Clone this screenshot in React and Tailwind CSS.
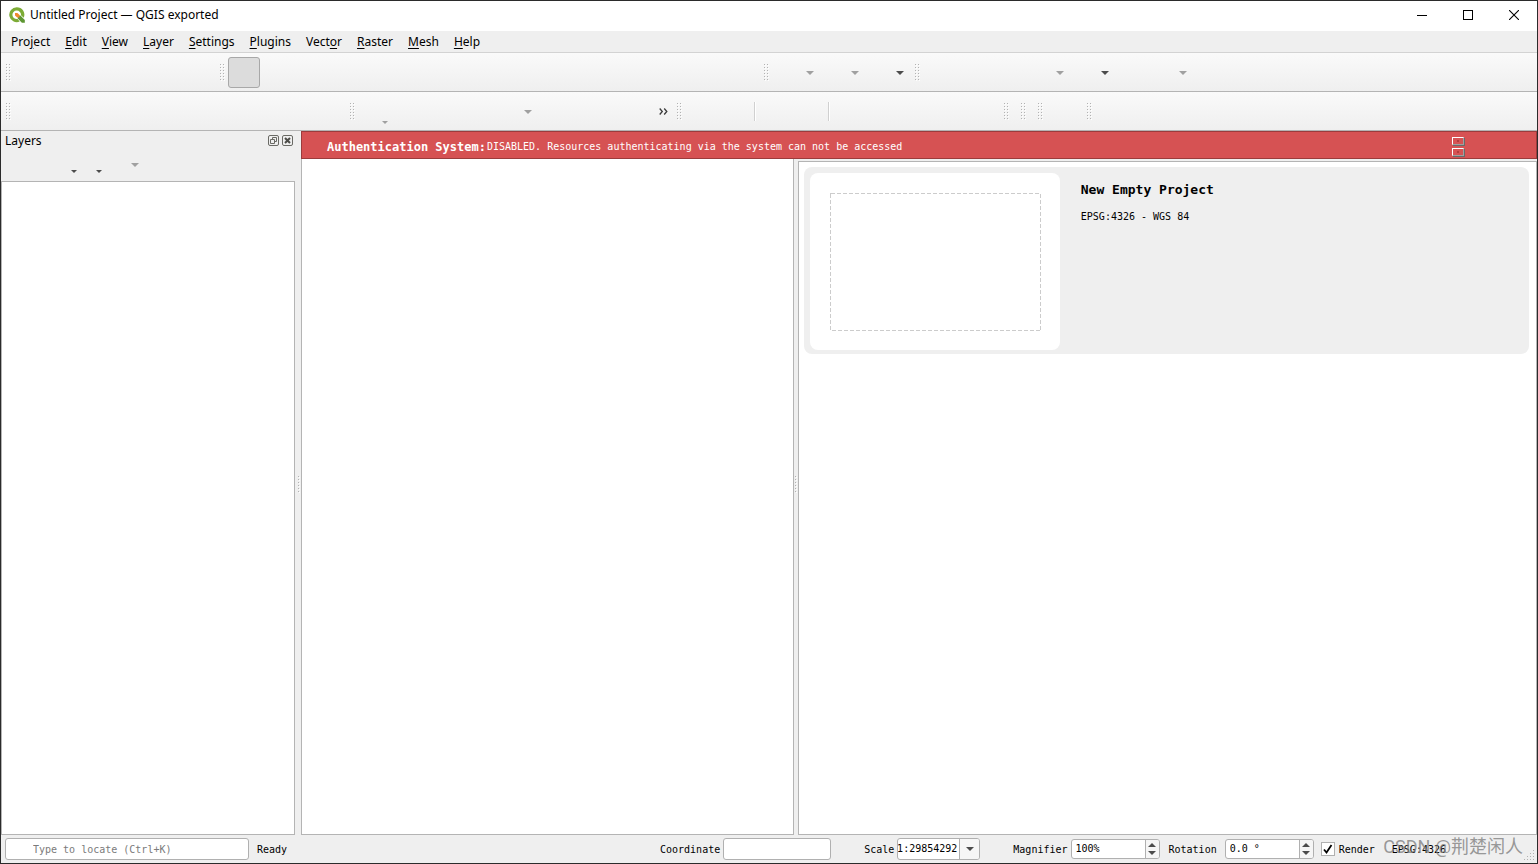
const MONO = 'font-["DejaVu_Sans_Mono","Liberation_Mono",monospace] text-[10px] leading-3';

function Dots({ className = '' }) {
  return (
    <svg className={'shrink-0 ' + className} width="5" height="18" aria-hidden="true" shapeRendering="crispEdges">
      {Array.from({ length: 6 }, (_, i) => (
        <g key={i}>
          <path d={`M1 ${i * 3 + 1}h1v1h-1zM4 ${i * 3 + 1}h1v1h-1z`} fill="#fff" />
          <path d={`M0 ${i * 3}h1v1h-1zM3 ${i * 3}h1v1h-1z`} fill="#b2b2b2" />
        </g>
      ))}
    </svg>
  );
}

function SplitterDots() {
  return (
    <svg className="shrink-0" width="2" height="18" aria-hidden="true" shapeRendering="crispEdges">
      {Array.from({ length: 6 }, (_, i) => (
        <g key={i}>
          <path d={`M1 ${i * 3 + 1}h1v1h-1z`} fill="#fff" />
          <path d={`M0 ${i * 3}h1v1h-1z`} fill="#b2b2b2" />
        </g>
      ))}
    </svg>
  );
}

function Arrow({ dark = false, small = false, className = '' }) {
  return small ? (
    <svg className={className} width="6" height="3" viewBox="0 0 6 3" aria-hidden="true">
      <path d="M0 0h6L3 3z" fill={dark ? '#4c4c4c' : '#a0a0a0'} />
    </svg>
  ) : (
    <svg className={className} width="8" height="4" viewBox="0 0 8 4" aria-hidden="true">
      <path d="M0 0h8L4 4z" fill={dark ? '#4c4c4c' : '#a0a0a0'} />
    </svg>
  );
}

function Group({ width = '', children }) {
  return (
    <div className={'flex h-full shrink-0 items-center pt-px ' + width}>
      <Dots className="mr-1 ml-[5px] w-1 overflow-visible" />
      {children}
    </div>
  );
}

function Tools({ names }) {
  return names.map((n) => <button key={n} type="button" aria-label={n} className="h-8 w-8 shrink-0" />);
}

function MenuTool({ label, dark }) {
  return (
    <button type="button" aria-label={label} className="flex h-8 w-[45px] shrink-0 items-center justify-end pr-[3px]">
      <Arrow dark={dark} />
    </button>
  );
}

function Separator() {
  return <div className="mr-[3px] ml-[5px] h-[19px] w-0.5 shrink-0 border-r border-l border-r-white border-l-[#d0d0d0]" />;
}

const TOOLBAR = 'flex h-[39px] shrink-0 items-center overflow-hidden border-b border-[#b4b4b4] bg-linear-to-b from-[#fafafa] to-[#efefef]';

const MENUS = [
  ['Pro', 'j', 'ect'],
  ['', 'E', 'dit'],
  ['', 'V', 'iew'],
  ['', 'L', 'ayer'],
  ['', 'S', 'ettings'],
  ['', 'P', 'lugins'],
  ['Vect', 'o', 'r'],
  ['', 'R', 'aster'],
  ['', 'M', 'esh'],
  ['', 'H', 'elp'],
];

function TitleBar() {
  return (
    <header className="flex h-[30px] shrink-0 items-center bg-white pb-0.5 pl-2">
      <svg width="16" height="16" viewBox="0 0 16 16" aria-hidden="true">
        <path d="M7.700 .2a7.500 7.500 0 1 0 3 14.400L8.600 12A4.300 4.300 0 1 1 12 8.200l2.700 2.600A7.500 7.500 0 0 0 7.700 .2z" fill="#7cab35" />
        <path d="M8.800 8.600h2.600l4.400 4.300v2.800h-2.900L8.800 11.600z" fill="#5d9632" />
        <path d="M6 6h2.400l2.200 2-.2 2.400H8.200L6 8.400z" fill="#ee8a2c" />
      </svg>
      <h1 className="ml-[5px] grow truncate text-[12px]">Untitled Project — QGIS exported</h1>
      <button type="button" aria-label="Minimize" className="grid h-full w-[46px] place-items-center">
        <svg width="10" height="10" shapeRendering="crispEdges"><path d="M0 5.500h10" stroke="#000" /></svg>
      </button>
      <button type="button" aria-label="Maximize" className="grid h-full w-[46px] place-items-center">
        <svg width="10" height="10" shapeRendering="crispEdges"><path d="M.5 .5h9v9h-9z" fill="none" stroke="#000" /></svg>
      </button>
      <button type="button" aria-label="Close" className="grid h-full w-[46px] place-items-center">
        <svg width="10" height="10"><path d="M0 0l10 10M10 0L0 10" stroke="#000" strokeWidth="1.100" /></svg>
      </button>
    </header>
  );
}

function LayersPanel() {
  return (
    <aside className="flex w-[294px] shrink-0 flex-col">
      <div className="flex h-5 items-center gap-[3px] pr-0.5 pb-px pl-1">
        <h2 className="grow text-[12px]">Layers</h2>
        <button type="button" aria-label="Float panel">
          <svg width="11" height="11" viewBox="0 0 11 11" fill="none" stroke="#6a6a65">
            <rect x=".5" y=".5" width="10" height="10" rx="1.500" />
            <path d="M4.500 4V2.500h4v4H7M2.500 4.500h4v4h-4z" />
          </svg>
        </button>
        <button type="button" aria-label="Close panel">
          <svg width="11" height="11" viewBox="0 0 11 11" fill="none" stroke="#6a6a65">
            <rect x=".5" y=".5" width="10" height="10" rx="1.500" />
            <path d="M3 3l5 5M8 3l-5 5" stroke="#4c4c48" strokeWidth="2" />
          </svg>
        </button>
      </div>
      <div className="flex h-[30px] items-center pb-0.5">
        <button type="button" aria-label="Open layer styling" className="h-6 w-6" />
        <button type="button" aria-label="Add group" className="h-6 w-6" />
        <button type="button" aria-label="Manage map themes" className="flex h-6 w-7 items-end justify-end pb-1"><Arrow small dark /></button>
        <button type="button" aria-label="Filter legend" className="flex h-6 w-[25px] items-end justify-end pb-1"><Arrow small dark /></button>
        <button type="button" aria-label="Filter by expression" className="flex h-6 w-[37px] items-center justify-end"><Arrow /></button>
      </div>
      <div className="grow border border-[#b4b4b4] bg-white" />
    </aside>
  );
}

function SpinBox({ id, value }) {
  return (
    <div className="flex h-5 w-[89px] shrink-0 rounded-[3px] border border-[#b0b0b0] bg-white">
      <input id={id} defaultValue={value} className="w-0 grow pl-1 outline-none" />
      <div className="flex w-[14px] flex-col rounded-r-[2px] border-l border-[#b0b0b0] bg-[#f6f6f6]">
        <button type="button" aria-label="Increase" className="flex grow items-end justify-center pb-0.5">
          <Arrow dark className="rotate-180" />
        </button>
        <button type="button" aria-label="Decrease" className="flex grow items-start justify-center pt-0.5">
          <Arrow dark />
        </button>
      </div>
    </div>
  );
}

function StatusBar() {
  return (
    <footer className={'relative flex h-7 shrink-0 items-center pl-1 text-black ' + MONO}>
      <input
        aria-label="Locator"
        placeholder="Type to locate (Ctrl+K)"
        className="h-[22px] w-[244px] rounded-[3px] border border-[#b0b0b0] bg-white pl-[27px] outline-none placeholder:text-[#7b7b7b]"
      />
      <span className="ml-2 grow pt-px">Ready</span>
      <label htmlFor="coordinate" className="pt-px">Coordinate</label>
      <input id="coordinate" className="mr-[33px] ml-[3px] h-[22px] w-[108px] rounded-[3px] border border-[#b0b0b0] bg-white px-1 outline-none" />
      <label htmlFor="scale" className="pt-px">Scale</label>
      <div className="mr-[33px] ml-[3px] flex h-[22px] w-[83px] rounded-[3px] border border-[#b0b0b0] bg-white">
        <div className="flex w-0 grow justify-end overflow-hidden">
          <input id="scale" defaultValue="1:29854292" className="w-[64px] shrink-0 pr-0.5 text-right outline-none" />
        </div>
        <button type="button" aria-label="Scale presets" className="grid w-5 place-items-center rounded-r-[2px] border-l border-[#b0b0b0] bg-[#f6f6f6]">
          <Arrow dark />
        </button>
      </div>
      <label htmlFor="magnifier" className="mr-[3px] pt-px">Magnifier</label>
      <SpinBox id="magnifier" value="100%" />
      <label htmlFor="rotation" className="mr-2 ml-[9px] pt-px">Rotation</label>
      <SpinBox id="rotation" value="0.0 °" />
      <label className="ml-[7px] flex items-center gap-1">
        <span className="grid h-[14px] w-[14px] place-items-center">
          <input type="checkbox" defaultChecked className="peer col-start-1 row-start-1 h-[14px] w-[14px] appearance-none border border-[#b0b0b0] bg-white" />
          <svg className="pointer-events-none col-start-1 row-start-1 hidden peer-checked:block" width="10" height="10" viewBox="0 0 10 10">
            <path d="M1 5.500l2.500 3L8.500 1" fill="none" stroke="#000" strokeWidth="1.800" />
          </svg>
        </span>
        <span className="pt-px">Render</span>
      </label>
      <button type="button" className="mr-[91px] ml-[17px] pt-px">EPSG:4326</button>
      <span className='pointer-events-none absolute right-3.5 bottom-0 font-["Roboto","Noto_Sans_CJK_SC",sans-serif] text-[18px] leading-8 text-[#808080]/80'>
        CSDN @荆楚闲人
      </span>
      <svg className="absolute right-0.5 bottom-0.5" width="11" height="11" fill="#b2b2b2" shapeRendering="crispEdges" aria-hidden="true">
        <path d="M9 0h1v1h-1zM6 3h1v1h-1zM9 3h1v1h-1zM3 6h1v1h-1zM6 6h1v1h-1zM9 6h1v1h-1zM0 9h1v1h-1zM3 9h1v1h-1zM6 9h1v1h-1zM9 9h1v1h-1z" />
      </svg>
    </footer>
  );
}

function MessageBar() {
  return (
    <div role="alert" className={'flex h-7 shrink-0 items-center border border-[#9b3c3c] bg-[#d65253] pr-[72px] pl-[25px] text-white ' + MONO}>
      <p className="flex grow items-center gap-px pt-1">
        <strong className="text-[12px]">Authentication System:</strong>
        <span>DISABLED. Resources authenticating via the system can not be accessed</span>
      </p>
      <div className="flex flex-col gap-[3px] pt-0.5">
        {['Message menu', 'Close message'].map((n) => (
          <button key={n} type="button" aria-label={n} className="flex h-2 w-3 items-center justify-center border border-t-white border-r-[#a0a0a0] border-b-[#a0a0a0] border-l-white shadow-[1px_1px_0_#696969]">
            <span className="h-0.5 w-0.5 bg-[#b23c3c]" />
          </button>
        ))}
      </div>
    </div>
  );
}

export default function App() {
  return (
    <div className='flex min-h-screen flex-col border border-[#2b2b2b] bg-[#efefef] font-["Noto_Sans","Noto_Sans_CJK_SC",sans-serif] text-[12px] text-black'>
      <TitleBar />
      <nav className="flex h-[22px] shrink-0 items-center gap-[15px] border-b border-[#d3d3d3] pl-[10px]">
        {MENUS.map(([a, b, c]) => (
          <button key={a + b + c} type="button" className="leading-5">
            {a}
            <span className="underline underline-offset-2">{b}</span>
            {c}
          </button>
        ))}
      </nav>

      <div role="toolbar" aria-label="Project and navigation" className={TOOLBAR}>
        <Group width="w-[214px]">
          <Tools names={['New', 'Open', 'Save', 'New Layout', 'Layout Manager', 'Style Manager']} />
        </Group>
        <Group width="w-[544px]">
          <button type="button" aria-label="Pan Map" aria-pressed="true" className="h-[31px] w-8 shrink-0 rounded-[3px] border border-[#a8a8a8] bg-[#dcdcdc]" />
          <Tools names={['Pan to Selection', 'Zoom In', 'Zoom Out', 'Zoom Full', 'Zoom to Selection', 'Zoom to Layer', 'Zoom Native', 'Zoom Last', 'Zoom Next', 'New Map View', 'New 3D View', 'New Bookmark', 'Show Bookmarks', 'Temporal', 'Refresh']} />
        </Group>
        <Group width="w-[151px]">
          <MenuTool label="Select Features" />
          <MenuTool label="Select by Value" />
          <MenuTool label="Deselect" dark />
        </Group>
        <Group>
          <Tools names={['Identify', 'Attribute Table', 'Field Calculator']} />
          <div className="w-[3px] shrink-0" />
          <MenuTool label="Statistics" />
          <MenuTool label="Measure" dark />
          <Tools names={['Map Tips']} />
          <div className="w-px shrink-0" />
          <MenuTool label="Annotations" />
        </Group>
      </div>

      <div role="toolbar" aria-label="Data and editing" className={TOOLBAR}>
        <Group width="w-[344px]">
          <Tools names={['Data Source Manager', 'New GeoPackage', 'New Shapefile', 'New SpatiaLite', 'New Virtual Layer', 'New Mesh', 'New GPX', 'Add Vector', 'Add Raster', 'Add Mesh']} />
        </Group>
        <Group width="w-[327px]">
          <button type="button" aria-label="Current Edits" className="flex h-6 w-[30px] shrink-0 items-end justify-end">
            <Arrow small />
          </button>
          <Tools names={['Toggle Editing', 'Save Edits', 'Add Feature']} />
          <div className="w-1.5 shrink-0" />
          <MenuTool label="Vertex Tool" />
          <Tools names={['Modify Attributes', 'Delete Selected', 'Cut']} />
          <button type="button" aria-label="More tools" className="flex h-8 grow items-center justify-center pl-6">
            <svg width="9" height="7" viewBox="0 0 9 7" fill="none" stroke="#3c3c3c" strokeWidth="1.300">
              <path d="M.7 .5l2.600 3-2.600 3M5.200 .5l2.600 3-2.600 3" />
            </svg>
          </button>
        </Group>
        <Group width="w-[327px]">
          <Tools names={['Label Options', 'Diagram Options']} />
          <Separator />
          <Tools names={['Highlight Labels', 'Show Unplaced']} />
          <Separator />
          <Tools names={['Pin Labels', 'Show Labels', 'Move Label', 'Rotate Label', 'Change Label']} />
        </Group>
        <Group width="w-[17px]" />
        <Group width="w-[17px]" />
        <Group width="w-[49px]">
          <Tools names={['Python Console']} />
        </Group>
        <Group>
          <Tools names={['Help Contents']} />
        </Group>
      </div>

      <div className="flex grow">
        <LayersPanel />
        <div className="flex w-1.5 shrink-0 items-center justify-center pt-1 pl-px"><SplitterDots /></div>
        <main className="flex min-w-0 grow flex-col">
          <MessageBar />
          <div className="grid grow grid-cols-[2fr_4px_3fr]">
            <section aria-label="Map canvas" className="border-x border-b border-[#b4b4b4] bg-white" />
            <div className="flex items-center justify-center pb-6"><SplitterDots /></div>
            <section aria-label="Project templates" className="mt-0.5 min-w-0 border border-[#b4b4b4] bg-white py-[5px] pr-[7px] pl-[5px]">
              <article className="flex rounded-lg bg-[#efefef] pt-1.5 pr-4 pb-1 pl-1.5">
                <div className="h-[177px] w-[250px] shrink-0 rounded-lg bg-white p-5">
                  <svg className="block h-full w-full overflow-visible" aria-hidden="true">
                    <rect x="0.5" y="0.5" width="210" height="137" fill="none" stroke="#cccccc" strokeDasharray="4 2" shapeRendering="crispEdges" />
                  </svg>
                </div>
                <div className="ml-[21px] pt-[9px]">
                  <h3 className='font-["DejaVu_Sans_Mono","Liberation_Mono",monospace] text-[13px] leading-4 font-bold'>New Empty Project</h3>
                  <p className={'mt-[13px] text-black ' + MONO}>EPSG:4326 - WGS 84</p>
                </div>
              </article>
            </section>
          </div>
        </main>
      </div>

      <StatusBar />
    </div>
  );
}
